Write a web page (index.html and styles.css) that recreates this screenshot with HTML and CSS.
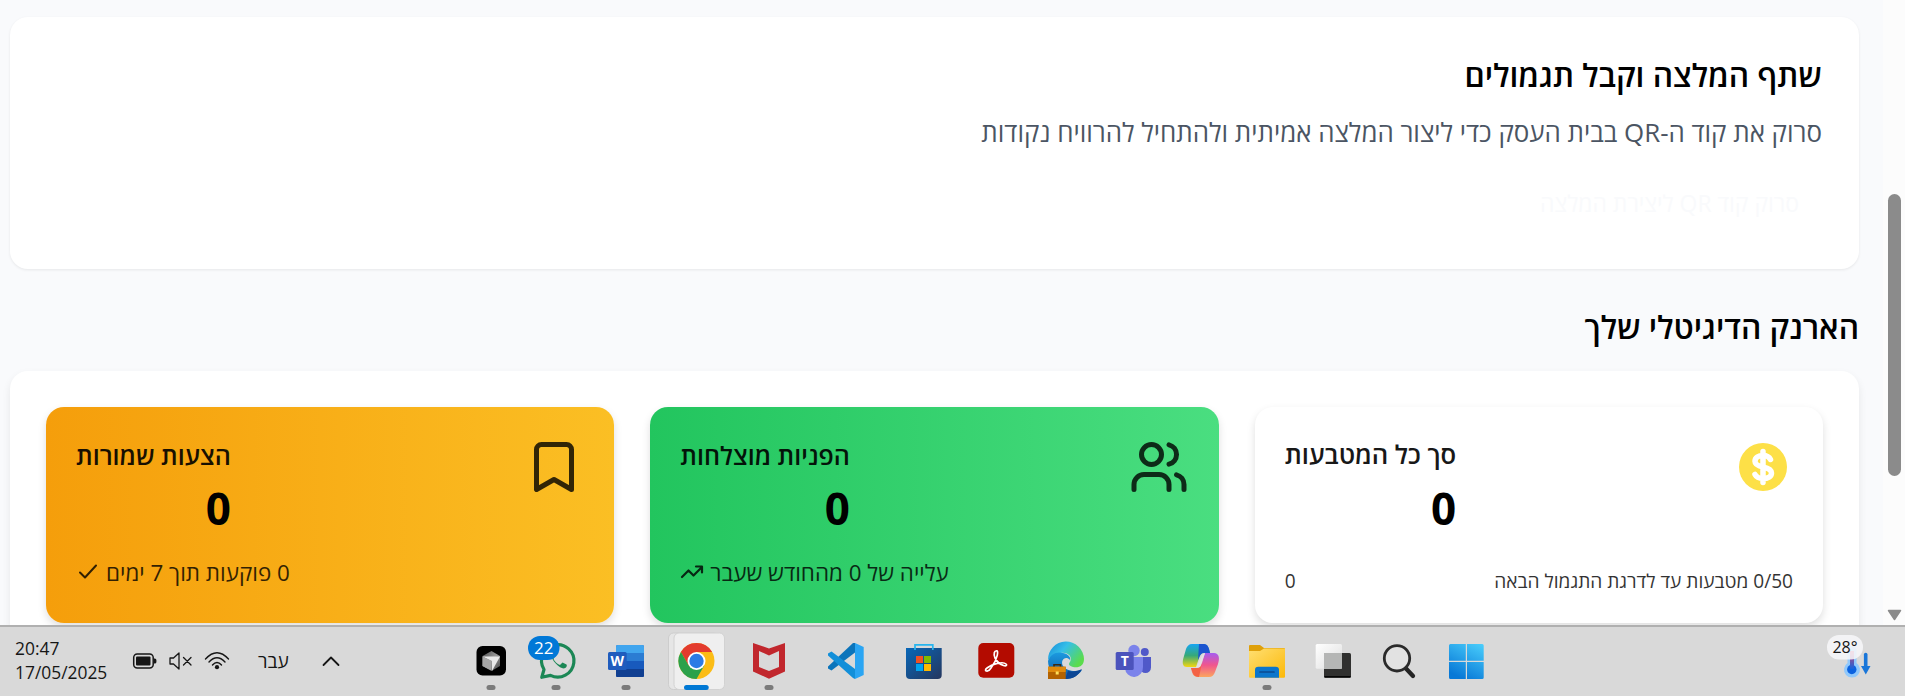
FILE: index.html
```html
<!DOCTYPE html>
<html lang="he" dir="rtl">
<head>
<meta charset="utf-8">
<title>הארנק הדיגיטלי שלך</title>
<link rel="stylesheet" href="styles.css">
</head>
<body>
<div class="screen">
  <div class="viewport">
    <div class="scrollbar">
      <div class="thumb"></div>
      <svg class="scroll-arrow" viewBox="0 0 15 12"><path d="M1.500 1.500H13.500L7.500 10.500Z" fill="#8b8b8b" stroke="#8b8b8b" stroke-width="1.500" stroke-linejoin="round"/></svg>
    </div>
    <main class="page">
      <section class="share">
        <h2 class="title">שתף המלצה וקבל תגמולים</h2>
        <p class="lead">סרוק את קוד ה-QR בבית העסק כדי ליצור המלצה אמיתית ולהתחיל להרוויח נקודות</p>
        <button class="scan">סרוק קוד QR ליצירת המלצה</button>
      </section>
      <h2 class="title wallet-title">הארנק הדיגיטלי שלך</h2>
      <section class="wallet">
        <article class="tile coins">
          <div class="tile-head">
            <svg class="tile-icon coin" viewBox="0 0 60 60"><circle cx="30" cy="30" r="24" fill="#fde047"/><path d="M37.500 22.500C36 19.500 33 18.500 30 18.500C25.500 18.500 22 20.800 22 24.200C22 27.600 25.500 29 30 30C34.500 31 38.500 32.500 38.500 36C38.500 39.500 34.800 41.500 30 41.500C26.500 41.500 23.500 40.300 22 37.500M30 14.500V45.500" fill="none" stroke="#fff" stroke-width="5.500" stroke-linecap="round"/></svg>
            <div class="figures"><h3 class="label">סך כל המטבעות</h3><p class="value">0</p></div>
          </div>
          <div class="progress"><span>0/50 מטבעות עד לדרגת התגמול הבאה</span><span>0</span></div>
        </article>
        <article class="tile referrals">
          <div class="tile-head">
            <svg class="tile-icon" viewBox="0 0 24 24"><path d="M16 21v-2a4 4 0 0 0-4-4H6a4 4 0 0 0-4 4v2M22 21v-2a4 4 0 0 0-3-3.870M16 3.130a4 4 0 0 1 0 7.750"/><circle cx="9" cy="7" r="4"/></svg>
            <div class="figures"><h3 class="label">הפניות מוצלחות</h3><p class="value">0</p></div>
          </div>
          <div class="note"><span>עלייה של 0 מהחודש שעבר</span><svg class="note-icon trend" viewBox="0 0 24 24"><path d="M2 17L8.500 10.500L13.500 15.500L22 7M16 6.500H22V12.500"/></svg></div>
        </article>
        <article class="tile offers">
          <div class="tile-head">
            <svg class="tile-icon" viewBox="0 0 24 24"><path d="M19 21l-7-4-7 4V5a2 2 0 0 1 2-2h10a2 2 0 0 1 2 2z"/></svg>
            <div class="figures"><h3 class="label">הצעות שמורות</h3><p class="value">0</p></div>
          </div>
          <div class="note"><span>0 פוקעות תוך 7 ימים</span><svg class="note-icon" viewBox="0 0 24 24"><path d="M4 12.500L9 17.500L20 5.500"/></svg></div>
        </article>
      </section>
    </main>
  </div>

  <footer class="taskbar" dir="ltr">
    <div class="clock"><span>20:47</span><span>17/05/2025</span></div>
    <div class="tray">
      <svg class="tray-icon" viewBox="0 0 26 22"><rect x="1.700" y="4" width="19.500" height="14" rx="3.500" fill="none" stroke="#161616" stroke-width="1.500"/><rect x="4" y="6.500" width="14.500" height="9" rx="1" fill="#161616"/><path d="M22 8.500h.8a1.600 1.600 0 0 1 1.600 1.600v1.800a1.600 1.600 0 0 1-1.600 1.600H22z" fill="#161616"/></svg>
      <svg class="tray-icon mute" viewBox="0 0 26 22"><path d="M2 8H5.500L11 3V19L5.500 14H2ZM15.500 7.500L23 15M23 7.500L15.500 15" fill="none" stroke="#161616" stroke-width="1.300" stroke-linejoin="round" stroke-linecap="round"/></svg>
      <svg class="tray-icon wifi" viewBox="0 0 26 22"><g fill="none" stroke="#161616" stroke-width="1.400" stroke-linecap="round"><path d="M1.500 9Q13-3.500 24.500 9"/><path d="M5 12Q13 3.500 21 12"/><path d="M8.500 15Q13 10 17.500 15"/></g><circle cx="13" cy="17.200" r="2.100" fill="#161616"/></svg>
    </div>
    <span class="language">עבר</span>
    <svg class="chevron" viewBox="0 0 18 12"><path d="M1.500 10L9 2.500L16.500 10" fill="none" stroke="#161616" stroke-width="1.800" stroke-linecap="round" stroke-linejoin="round"/></svg>

    <div class="apps">
      <svg class="app" viewBox="-27 -34 54 69"><defs><linearGradient id="cube" x1="0" y1="0" x2="1" y2="1"><stop offset="0" stop-color="#4a4a4a"/><stop offset=".5" stop-color="#999"/><stop offset="1" stop-color="#444"/></linearGradient></defs><rect x="-14.500" y="-15" width="29.500" height="29.500" rx="6" fill="#000"/><path d="M.5-10L9-5V5L.5 10L-8.500 5V-5Z" fill="url(#cube)"/><path d="M-8.500-4.500H9L1 10V0Z" fill="#e9e9e9"/><path d="M-8.500-4.500L.5 0V9.500L-8.500 5Z" fill="#a5a5a5"/><path class="dot" d="M-2 26.500H2"/></svg>
      <svg class="app" viewBox="-27 -34 54 69"><path d="M-14.200 16.300L-12 8.500A16.200 16.200 0 1 1-5.500 14.400Z" fill="none" stroke="#1b8755" stroke-width="3.200" stroke-linejoin="round"/><path d="M-4.500-7C-6-4 0 5 6.500 7.300C10 8 11.500 5 10.500 3.500L6.500 1.500L4 4C1 3-1.500.5-2.500-2L-1-5L-3-9Z" fill="#1b8755"/><rect x="-28" y="-25" width="31.500" height="24" rx="12" fill="#0078d7"/><text x="-12.200" y="-7" class="badge-text">22</text><path class="dot" d="M-2 26.500H2"/></svg>
      <svg class="app" viewBox="-27 -34 54 69"><rect x="-10" y="-16" width="28" height="32" rx="1.500" fill="#185abd"/><path d="M-10-8V-14.500a1.500 1.500 0 0 1 1.500-1.500H16.500a1.500 1.500 0 0 1 1.500 1.500V-8Z" fill="#41a5ee"/><path d="M-10-8H18V0H-10Z" fill="#2b7cd3"/><path d="M-10 8H18V14.500a1.500 1.500 0 0 1-1.500 1.500H-8.500a1.500 1.500 0 0 1-1.500-1.500Z" fill="#103f91"/><rect x="-18" y="-9" width="18.700" height="18" rx="1.500" fill="#1f5cbd"/><text x="-8.800" y="5" class="word-text">W</text><path class="dot" d="M-2 26.500H2"/></svg>
      <svg class="app" viewBox="-27 -34 54 69"><rect x="-27.500" y="-28" width="50" height="56.500" rx="5" fill="#e6e6e6" stroke="#cdcdcd"/><rect x="-22" y="-28" width="50.500" height="56.500" rx="5" fill="#efefef" stroke="#d2d2d2"/><g transform="translate(.5 0)"><circle r="18" fill="#fbbc15"/><path d="M-15.600-9A18 18 0 0 1 15.600-9H0L-7.800 4.500Z" fill="#e33b2e"/><path d="M-15.600-9A18 18 0 0 0 0 18L7.800 4.500H-7.800Z" fill="#2ba14b"/><circle r="9" fill="#fff"/><circle r="7.200" fill="#2c7be5"/></g><rect x="-12" y="24" width="24.700" height="5" rx="2.500" fill="#0078d4"/></svg>
      <svg class="app" viewBox="-27 -34 54 69"><path fill-rule="evenodd" fill="#c1272d" d="M-16-18L0-12.500L16-18V10.500L0 17.800L-16 10.500ZM-10-10V6L0 10L10 6V-10L0-5.500Z"/><path class="dot" d="M-2 26.500H2"/></svg>
      <svg class="app" viewBox="-27 -34 54 69"><path d="M10-18L18.700-14V14L10 18Z" fill="#2aa5f3"/><path d="M-17 5.500L8-18L10-18V-8.500L-13.500 9.500L-17 7.500Z" fill="#0b74bb"/><path d="M-17-7.500L-13.500-9.500L10 8V18L8 17L-17-5.500Z" fill="#128fd9"/></svg>
      <svg class="app" viewBox="-27 -34 54 69"><defs><linearGradient id="store" x1="0" y1="0" x2="1" y2="1"><stop offset="0" stop-color="#0867b8"/><stop offset="1" stop-color="#25365e"/></linearGradient></defs><path d="M-18-13H17.700V14a4 4 0 0 1-4 4H-14a4 4 0 0 1-4-4Z" fill="url(#store)"/><path d="M-9-11V-16.200H8.800V-11" fill="none" stroke="#27b5ee" stroke-width="1.700"/><path fill="#f25022" d="M-8-5h7v7h-7z"/><path fill="#7fba00" d="M0-5h7v7h-7z"/><path fill="#00a4ef" d="M-8 3h7v7h-7z"/><path fill="#ffb900" d="M0 3h7v7h-7z"/></svg>
      <svg class="app" viewBox="-27 -34 54 69"><rect x="-17.700" y="-18" width="36" height="34.700" rx="5" fill="#b30b00"/><path d="M0-10C3-12 2-2-5 7C-8 12-13 10-9 7C-4 3 7 0 10 3C13 6 4 6-1-3C-3-8-1-10 0-10Z" fill="none" stroke="#fff" stroke-width="1.700" stroke-linejoin="round"/></svg>
      <svg class="app" viewBox="-27 -34 54 69"><defs><linearGradient id="edge-top" x1="0" y1="0" x2="1" y2=".6"><stop offset="0" stop-color="#1688d8"/><stop offset=".45" stop-color="#35bfe8"/><stop offset="1" stop-color="#5bdc4c"/></linearGradient><linearGradient id="edge-low" x1="0" y1="0" x2="0" y2="1"><stop offset="0" stop-color="#1b9be0"/><stop offset="1" stop-color="#1058a8"/></linearGradient></defs><path d="M-18-1A18 18 0 0 1 18-2C18 5 13 7 7 6C3 5 2 3 4 1C7-4 2-9-5-8C-11-7-16-4-18-1Z" fill="url(#edge-top)"/><path d="M-18 0C-16-7-9-10-3-8C3-7 5-3 4-1C-1-6-6 0-3 5C0 10 9 11 16 9C11 16 5 18-1 18C-11 17-18 9-18 0Z" fill="url(#edge-low)"/><path d="M2 10C7 11 12 10 16 8C12 15 7 18-1 18Z" fill="#0b4695"/><path d="M-12 6V3.700H-5.500V6" fill="none" stroke="#3d2a12" stroke-width="1.600"/><rect x="-18" y="5.700" width="17.700" height="12.300" fill="#b36200"/><path d="M-18 5.700H-.3V11H-18Z" fill="#e08b0c"/><rect x="-10.300" y="10.500" width="3" height="3" fill="#ffe05a"/></svg>
      <svg class="app" viewBox="-27 -34 54 69"><circle cx="11.800" cy="-9" r="4" fill="#5059c9"/><path d="M4-4H18V6.500a5.500 5.500 0 0 1-11 0Z" fill="#5059c9"/><circle cx="1" cy="-10.500" r="5.700" fill="#7b83eb"/><path d="M-8-4H10V6A9 9.500 0 0 1-8 7Z" fill="#7b83eb"/><rect x="-17.300" y="-9" width="18" height="18" rx="1.500" fill="#4b53bc"/><text x="-8.300" y="5" class="teams-text">T</text></svg>
      <svg class="app" viewBox="-27 -34 54 69"><defs><linearGradient id="co1" x1="0" y1="0" x2="0" y2="1"><stop offset="0" stop-color="#16a5f3"/><stop offset=".5" stop-color="#35a979"/><stop offset="1" stop-color="#f5d70f"/></linearGradient><linearGradient id="co2" x1="0" y1="0" x2="0" y2="1"><stop offset="0" stop-color="#a55cf0"/><stop offset=".5" stop-color="#f0558e"/><stop offset="1" stop-color="#fba65e"/></linearGradient></defs><path d="M-8-17H3C8-17 9-13 10-8H4C1-8 0-6-1-3L-4 6H-13C-18 6-18 1-16-5L-14-12C-13-15-11-17-8-17Z" fill="url(#co1)"/><path d="M-1-17H4C8-17 9-13 10-8H4C1-8 0-6-1-3L-2-1Z" fill="#1b55cf"/><path d="M9 16H-2C-7 16-8 12-9 7H-3C0 7 1 5 2 2L5-8H14C19-8 20-3 18 3L15 11C14 14 12 16 9 16Z" fill="url(#co2)"/><path d="M-1 16C-7 16-7 12-9 7H-3C0 7 1 5 2 2Z" fill="#f36245"/><path d="M3-7L5-8L0 6L-4 7Z" fill="#e5dfe3"/></svg>
      <svg class="app" viewBox="-27 -34 54 69"><defs><linearGradient id="folder" x1="0" y1="0" x2="1" y2="1"><stop offset="0" stop-color="#ffdf72"/><stop offset="1" stop-color="#fcb90a"/></linearGradient></defs><path d="M-18-8V-15a1 1 0 0 1 1-1H-7L-3-13H17a1 1 0 0 1 1 1V-8Z" fill="#dfa00a"/><path d="M-18-10H-7L-3-12.500H18V15.700a1 1 0 0 1-1 1H-17a1 1 0 0 1-1-1Z" fill="url(#folder)"/><path d="M-12 16.700V9a3.300 3.300 0 0 1 3.300-3.300H8.700A3.300 3.300 0 0 1 12 9V16.700Z" fill="#0c76cc"/><path d="M-7 11H7" stroke="#0b4b91" stroke-width="1.700" stroke-linecap="round"/><path class="dot" d="M-2 26.500H2"/></svg>
      <svg class="app" viewBox="-27 -34 54 69"><defs><linearGradient id="pane" x1="0" y1="0" x2="1" y2="1"><stop offset="0" stop-color="#fff"/><stop offset="1" stop-color="#dedede"/></linearGradient></defs><rect x="-9" y="-8" width="27" height="24.700" rx="1.500" fill="#30302f"/><path d="M-8.500 15.800H17.500" stroke="#050505" stroke-width="1.600"/><rect x="-17.300" y="-17" width="26.300" height="24.700" rx="1.500" fill="url(#pane)"/><path d="M-9-8H9V7.700H-9Z" fill="#b5b6b5"/></svg>
      <svg class="app" viewBox="-27 -34 54 69"><path d="M7 7.500L14 15" stroke="#242424" stroke-width="4.300" stroke-linecap="round"/><circle cx="-2" cy="-2.700" r="12.700" fill="#e2e2e2" stroke="#2a2a2a" stroke-width="2.800"/></svg>
      <svg class="app" viewBox="-27 -34 54 69"><defs><linearGradient id="win" gradientUnits="userSpaceOnUse" x1="-4" y1="18" x2="14" y2="-17"><stop offset="0" stop-color="#0879d7"/><stop offset="1" stop-color="#48ccfb"/></linearGradient></defs><path fill="url(#win)" d="M-16.500-17H-1.200V-.2H-18V-15.500a1.500 1.500 0 0 1 1.500-1.500ZM0-17H15.200a1.500 1.500 0 0 1 1.500 1.500V-.2H0ZM-18 1H-1.200V18H-16.500a1.500 1.500 0 0 1-1.500-1.500ZM0 1H16.700V16.500a1.500 1.500 0 0 1-1.500 1.500H0Z"/></svg>
    </div>

    <svg class="weather" viewBox="0 0 56 48"><defs><linearGradient id="mercury" x1="0" y1="0" x2="0" y2="1"><stop offset="0" stop-color="#d84472"/><stop offset="1" stop-color="#1464dc"/></linearGradient></defs><path d="M21.500 15a4.500 4.500 0 0 1 9 0V28a8 8 0 1 1-9 0Z" fill="#90c8fb"/><circle cx="25.800" cy="34.500" r="4.700" fill="#0b62e0"/><path d="M24 16h4V34h-4z" fill="url(#mercury)"/><path d="M39.700 19.500V32" stroke="#1976d9" stroke-width="3.600" stroke-linecap="round"/><path d="M35 31H44.500L39.800 39.500Z" fill="#1976d9"/><rect x="1" y="0" width="36" height="24.500" rx="12" fill="#f6f6f8" fill-opacity=".88"/><text x="19" y="18" class="temperature">28°</text></svg>
  </footer>
</div>
</body>
</html>
```
FILE: styles.css
```css
* { box-sizing: border-box; }
body { margin: 0; font-family: "Open Sans", "Noto Sans", sans-serif; color: #000; }
h2, h3, p { margin: 0; }
.screen { display: flex; flex-direction: column; width: 1905px; height: 696px; overflow: hidden; }
.viewport { display: flex; direction: ltr; flex-direction: row-reverse; height: 625px; overflow: hidden; background: #f9fafc; }
.page { direction: rtl; flex: 1; padding: 17px 24px 0 10px; }
.scrollbar { display: flex; flex-direction: column; align-items: center; width: 22px; padding: 194px 3px 0 4px; background: #fcfcfc; }
.thumb { width: 13px; height: 282px; border-radius: 7px; background: #8b8b8b; }
.scroll-arrow { width: 15px; height: 12px; margin-top: 133px; flex: none; }
.share { height: 252px; padding: 36px 37px; border-radius: 18px; background: #fff; box-shadow: 0 1px 3px rgb(0 0 0 / 8%); }
.title { height: 44px; line-height: 44px; font-size: 31.700px; font-weight: 600; white-space: nowrap; }
.lead { height: 38px; margin-top: 16px; line-height: 38px; font-size: 25.900px; color: #4b5563; white-space: nowrap; }
.scan { display: block; margin: 34px 0 0; padding: 0 23px; border: 0; background: none; height: 38px; line-height: 38px; font-family: inherit; font-size: 22.900px; color: #f9fafc; }
.wallet-title { margin-top: 36px; }
.wallet { display: grid; grid-template-columns: repeat(3, 1fr); gap: 36px; height: 400px; margin-top: 22px; padding: 36px; border-radius: 18px; background: #fff; box-shadow: 0 4px 8px rgb(0 0 0 / 8%); }
.tile { height: 216px; padding: 30px; border-radius: 18px; box-shadow: 0 4px 8px rgb(0 0 0 / 13%); }
.coins { background: #fff; }
.referrals { background: linear-gradient(to right, #22c55e, #4ade80); }
.offers { background: linear-gradient(to right, #f59e0b, #fbbf24); }
.tile-head { display: flex; justify-content: space-between; align-items: flex-start; }
.tile-icon { width: 60px; height: 60px; fill: none; stroke: #000; stroke-width: 2; stroke-linecap: round; stroke-linejoin: round; opacity: .8; }
.coin { stroke: none; opacity: 1; }
.label { height: 36px; line-height: 36px; font-size: 25px; font-weight: 600; opacity: .9; white-space: nowrap; }
.coins .label { font-size: 25.600px; }
.value { height: 54px; margin-top: 8px; line-height: 54px; font-size: 44px; font-weight: 700; }
.progress { display: flex; justify-content: space-between; height: 28px; margin-top: 32px; line-height: 28px; font-size: 19.100px; opacity: .8; white-space: nowrap; }
.note { display: flex; align-items: center; justify-content: flex-end; gap: 6px; height: 32px; margin-top: 22px; line-height: 32px; font-size: 22.400px; opacity: .8; white-space: nowrap; }
.note-icon { width: 24px; height: 24px; margin-top: -3px; fill: none; stroke: #000; stroke-width: 2; stroke-linecap: round; stroke-linejoin: round; }
.trend { stroke-width: 2.200; }
.taskbar { display: flex; height: 71px; border-top: 2px solid #b0b0b0; background: #d9d9d9; color: #161616; }
.clock { display: flex; flex-direction: column; width: 132px; padding: 9px 0 0 15px; line-height: 24px; font-size: 17.400px; }
.tray { display: flex; align-items: center; gap: 10px; height: 68px; }
.tray-icon { width: 26px; height: 22px; }
.language { width: 65px; padding-left: 28px; line-height: 68px; font-size: 19px; }
.chevron { width: 18px; height: 12px; margin: 28px 119px 0 27px; }
.apps { display: grid; grid-template-columns: 64px 66px 74px 66px 79px 74px 84px 60px 80px 54px 80px 54px 78px 54px 82px; justify-items: center; }
.app { width: 54px; height: 69px; overflow: visible; }
.dot { stroke: #7b7b7b; stroke-width: 5; stroke-linecap: round; }
.badge-text { font-size: 17px; fill: #fff; text-anchor: middle; }
.word-text, .teams-text { font-size: 14px; font-weight: 700; fill: #fff; text-anchor: middle; }
.weather { width: 56px; height: 48px; margin: 8px 0 0 318px; }
.temperature { font-size: 16px; fill: #161616; text-anchor: middle; }
```
